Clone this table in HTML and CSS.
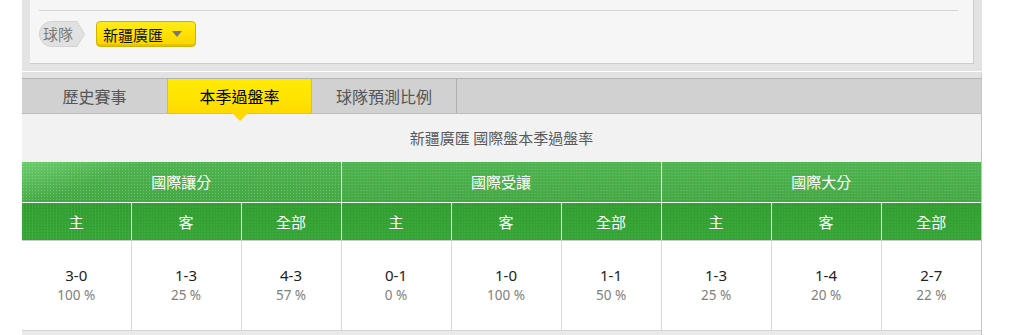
FILE: index.html
```html
<!DOCTYPE html>
<html lang="zh-Hant">
<head>
<meta charset="utf-8">
<title>本季過盤率</title>
<link rel="stylesheet" href="styles.css">
</head>
<body>
<div class="page">
  <div class="filter-frame">
    <div class="filter-panel">
      <div class="filter-top"></div>
      <div class="filter-row">
        <span class="tag">
          <svg class="tag-bg" width="46" height="26" viewBox="0 0 46 26"><path d="M12.5 0.5 H38 L45.5 13 L38 25.5 H12.5 A12 12.5 0 0 1 12.5 0.5 Z" fill="#e1e1e1" stroke="#d2d2d2"/></svg>
          <span class="tag-text">球隊</span>
        </span>
        <span class="select">新疆廣匯<span class="caret"></span></span>
      </div>
    </div>
  </div>

  <div class="stats">
    <div class="tabs">
      <div class="tab">歷史賽事</div>
      <div class="tab active">本季過盤率</div>
      <div class="tab last">球隊預測比例</div>
    </div>
    <div class="stats-body">
      <div class="subtitle">新疆廣匯 國際盤本季過盤率</div>
      <table class="rate">
        <colgroup>
          <col class="c109"><col class="c110"><col class="c100">
          <col class="c110"><col class="c110"><col class="c100">
          <col class="c110"><col class="c110"><col class="c100">
        </colgroup>
        <thead>
          <tr class="group">
            <th colspan="3">國際讓分</th>
            <th colspan="3">國際受讓</th>
            <th colspan="3">國際大分</th>
          </tr>
          <tr class="sub">
            <th>主</th><th>客</th><th>全部</th>
            <th>主</th><th>客</th><th>全部</th>
            <th>主</th><th>客</th><th>全部</th>
          </tr>
        </thead>
        <tbody>
          <tr>
            <td><span class="score">3-0</span><span class="pct">100 %</span></td>
            <td><span class="score">1-3</span><span class="pct">25 %</span></td>
            <td><span class="score">4-3</span><span class="pct">57 %</span></td>
            <td><span class="score">0-1</span><span class="pct">0 %</span></td>
            <td><span class="score">1-0</span><span class="pct">100 %</span></td>
            <td><span class="score">1-1</span><span class="pct">50 %</span></td>
            <td><span class="score">1-3</span><span class="pct">25 %</span></td>
            <td><span class="score">1-4</span><span class="pct">20 %</span></td>
            <td><span class="score">2-7</span><span class="pct">22 %</span></td>
          </tr>
        </tbody>
      </table>
      <div class="stats-foot"></div>
    </div>
  </div>
</div>
</body>
</html>
```

FILE: styles.css
```css
* { box-sizing: border-box; }
html, body { margin: 0; padding: 0; background: #ffffff; }
body {
  font-family: "Noto Sans", "Noto Sans CJK TC", sans-serif;
  font-size: 14px;
  color: #333;
}
.page {
  width: 960px;
  margin-left: 22px;
}

/* top filter panel */
.filter-frame {
  background: #e3e3e3;
  padding: 0 8px 7px 8px;
}
.filter-panel {
  background: #f6f6f6;
  border-right: 1px solid #cdcdcd;
  border-bottom: 1px solid #cdcdcd;
  padding: 0 15px 0 9px;
}
.filter-top {
  height: 11px;
  border-bottom: 1px solid #d6d6d6;
}
.filter-row {
  display: flex;
  align-items: center;
  gap: 11px;
  padding: 10px 0 16px;
}
.tag {
  position: relative;
  width: 46px;
  height: 26px;
  display: flex;
  align-items: center;
}
.tag-bg { position: absolute; left: 0; top: 0; }
.tag-text {
  position: relative;
  padding-left: 4px;
  font-family: "Noto Sans CJK TC", sans-serif;
  font-size: 15px;
  color: #7a7a7a;
  line-height: 26px;
}
.select {
  display: flex;
  align-items: center;
  width: 100px;
  height: 26px;
  padding-left: 6px;
  border: 1px solid #d2b200;
  border-radius: 4px;
  background: linear-gradient(#ffec1a, #ffe000 55%, #f7d400);
  box-shadow: inset 0 -2px 0 rgba(200,160,0,0.35);
  font-family: "Noto Sans CJK TC", sans-serif;
  font-size: 15px;
  color: #111;
}
.caret {
  width: 0; height: 0;
  margin-left: 9px;
  border-left: 5px solid transparent;
  border-right: 5px solid transparent;
  border-top: 6px solid #777;
}

/* stats block */
.stats {
  margin-top: 1px;
  border-top: 6px solid #e2e2e2;
  border-right: 1px solid #c4c4c4;
}
.tabs {
  display: flex;
  height: 36px;
  background: #d1d1d1;
  border-top: 1px solid #b3b3b3;
  border-bottom: 1px solid #bcbcbc;
}
.tab {
  width: 145px;
  display: flex;
  align-items: center;
  justify-content: center;
  font-family: "Noto Sans CJK TC", sans-serif;
  font-size: 16px;
  color: #555;
}
.tab.last { border-right: 1px solid #b0b0b0; }
.tab.active {
  position: relative;
  color: #000;
  background: linear-gradient(#ffea00, #ffe500 50%, #ffd900);
  box-shadow: inset 1px 0 0 #e6c200, inset -1px 0 0 #e6c200;
}
.tab.active::after {
  content: "";
  position: absolute;
  left: 50%;
  bottom: -8px;
  margin-left: -8px;
  border-left: 8px solid transparent;
  border-right: 8px solid transparent;
  border-top: 8px solid #ffd900;
}
.stats-body {
  background: #f2f2f2;
}
.subtitle {
  height: 48px;
  padding-bottom: 2px;
  display: flex;
  align-items: center;
  justify-content: center;
  font-family: "Noto Sans CJK TC", sans-serif;
  font-size: 15px;
  color: #5a5a5a;
}

.rate {
  width: 959px;
  border-collapse: collapse;
  table-layout: fixed;
}
.c109 { width: 109px; }
.c110 { width: 110px; }
.c100 { width: 100px; }
.rate th {
  font-family: "Noto Sans CJK TC", sans-serif;
  font-weight: normal;
  font-size: 15px;
  color: #fff;
  text-align: center;
  padding: 0;
}
.rate .group th {
  height: 40px;
  border-left: 1px solid #e8f5e8;
  border-bottom: 1px solid #f3faf3;
  background-color: #4aad4a;
  background-image:
    radial-gradient(circle, rgba(255,255,255,0.22) 0.7px, transparent 0.9px),
    linear-gradient(#4fb34f, #44a844);
  background-size: 3px 3px, 100% 100%;
}
.rate .group th:first-child {
  border-left: none;
  background-image:
    radial-gradient(circle, rgba(255,255,255,0.22) 0.7px, transparent 0.9px),
    linear-gradient(160deg, rgba(130,225,130,0.55), rgba(130,225,130,0) 30%),
    linear-gradient(#4fb34f, #44a844);
  background-size: 3px 3px, 100% 100%, 100% 100%;
}
.rate .sub th {
  height: 38px;
  border-left: 1px solid #e8f5e8;
  border-bottom: 1px solid #c9c9c9;
  background-color: #2f9f2f;
  background-image:
    radial-gradient(circle, rgba(255,255,255,0.18) 0.7px, transparent 0.9px),
    linear-gradient(#2f9e2f, #34a434);
  background-size: 3px 3px, 100% 100%;
}
.rate .sub th:first-child { border-left: none; }
.rate td {
  height: 90px;
  background: #fff;
  text-align: center;
  border-left: 1px solid #d9d9d9;
  border-bottom: 1px solid #d4d4d4;
  padding: 0;
}
.rate td:first-child { border-left: none; }
.score {
  display: block;
  font-size: 15px;
  line-height: 20px;
  color: #222;
}
.pct {
  display: block;
  font-size: 13.5px;
  line-height: 20px;
  color: #808080;
}
.stats-foot {
  height: 6px;
  background: #eaeaea;
}
```
